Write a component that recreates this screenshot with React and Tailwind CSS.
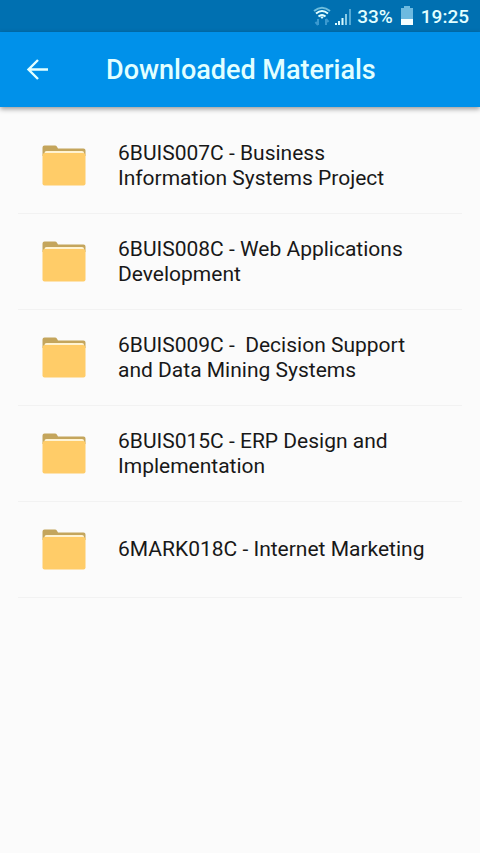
const materials = [
  "6BUIS007C - Business Information Systems Project",
  "6BUIS008C - Web Applications Development",
  "6BUIS009C -\u00a0 Decision Support and Data Mining Systems",
  "6BUIS015C - ERP Design and Implementation",
  "6MARK018C - Internet Marketing",
];

function FolderIcon() {
  return (
    <svg className="h-11 w-11 shrink-0" viewBox="0 0 44 44" aria-hidden="true">
      <path d="M0.500 12V3.500Q0.500 1.500 2.500 1.500H13Q14.300 1.500 15 2.800L16 4.500H41.500Q43.500 4.500 43.500 6.500V12Z" fill="#c4a55c" />
      <path d="M2.500 9Q2.500 7 4.500 7H40Q42 7 42 9V14H2.500Z" fill="#fff3d2" />
      <path d="M0.500 11Q0.500 9 3 9H41Q43.500 9 43.500 11V39.500Q43.500 41.500 41.500 41.500H2.500Q0.500 41.500 0.500 39.500Z" fill="#ffcc68" />
    </svg>
  );
}

function StatusBar() {
  return (
    <div className="flex h-8 items-center justify-end bg-[#0070b1] pt-0.5 pr-[11px] text-[19px] leading-6 font-medium text-[#e2ffff]">
      <svg className="mr-1 h-6 w-[18px]" viewBox="0 0 18 24" fill="none" aria-label="Wi-Fi">
        <path d="M1 6Q9 -0.500 17 6" stroke="#6ebddc" strokeWidth="2" />
        <path d="M3 8.500Q9 3.500 15 8.500M5.500 11.500Q9 8.500 12.500 11.500" stroke="#e2ffff" strokeWidth="2" />
        <path d="M7 11.500L9 14L11 11.500Z" fill="#e2ffff" />
        <path d="M5 14V20M2.500 17L5 20M13 20V14M15.500 17L13 14" stroke="#3b9ad0" strokeWidth="2" />
      </svg>
      <svg className="mr-1.5 h-6 w-4" viewBox="0 0 16 24" aria-label="Mobile signal">
        <path d="M0 18h2v2H0zM3 16h2v4H3zM6.500 13h2v7h-2z" fill="#d8faff" />
        <path d="M10 9h2v11h-2z" fill="#8acbe6" />
        <path d="M14 4h2v16h-2z" fill="#55a9d4" />
      </svg>
      <span>33%</span>
      <svg className="mx-1.5 h-6 w-4" viewBox="0 0 16 24" aria-label="Battery">
        <path d="M5 1h6v2h3v12H2V3h3z" fill="#6dbae0" />
        <path d="M2 14h12v6H2z" fill="#f5ffff" />
      </svg>
      <span>19:25</span>
    </div>
  );
}

export default function App() {
  return (
    <div className="min-h-screen bg-[#fbfbfb] font-['Roboto',sans-serif] text-[#181818]">
      <StatusBar />
      <header className="flex h-[75px] items-center bg-[#0091ea] px-6 text-[#e2ffff] shadow-[0_2px_5px_rgba(0,0,0,0.4)]">
        <button type="button" aria-label="Back">
          <svg className="h-7 w-7" viewBox="0 0 28 28" fill="none" stroke="currentColor" strokeWidth="2.400">
            <path d="M24 13.500H4.500M14 4L4.500 13.500L14 23" />
          </svg>
        </button>
        <h1 className="ml-[54px] pt-0.5 text-[27px] font-medium">Downloaded Materials</h1>
      </header>
      <main className="px-[18px] pt-[11px]">
        <ul>
          {materials.map((name) => (
            <li key={name} className="flex h-24 items-center border-b border-[#f2f2f2] pr-[30px] pl-6">
              <FolderIcon />
              <span className="ml-8 text-[21px] leading-[25px]">{name}</span>
            </li>
          ))}
        </ul>
      </main>
    </div>
  );
}
